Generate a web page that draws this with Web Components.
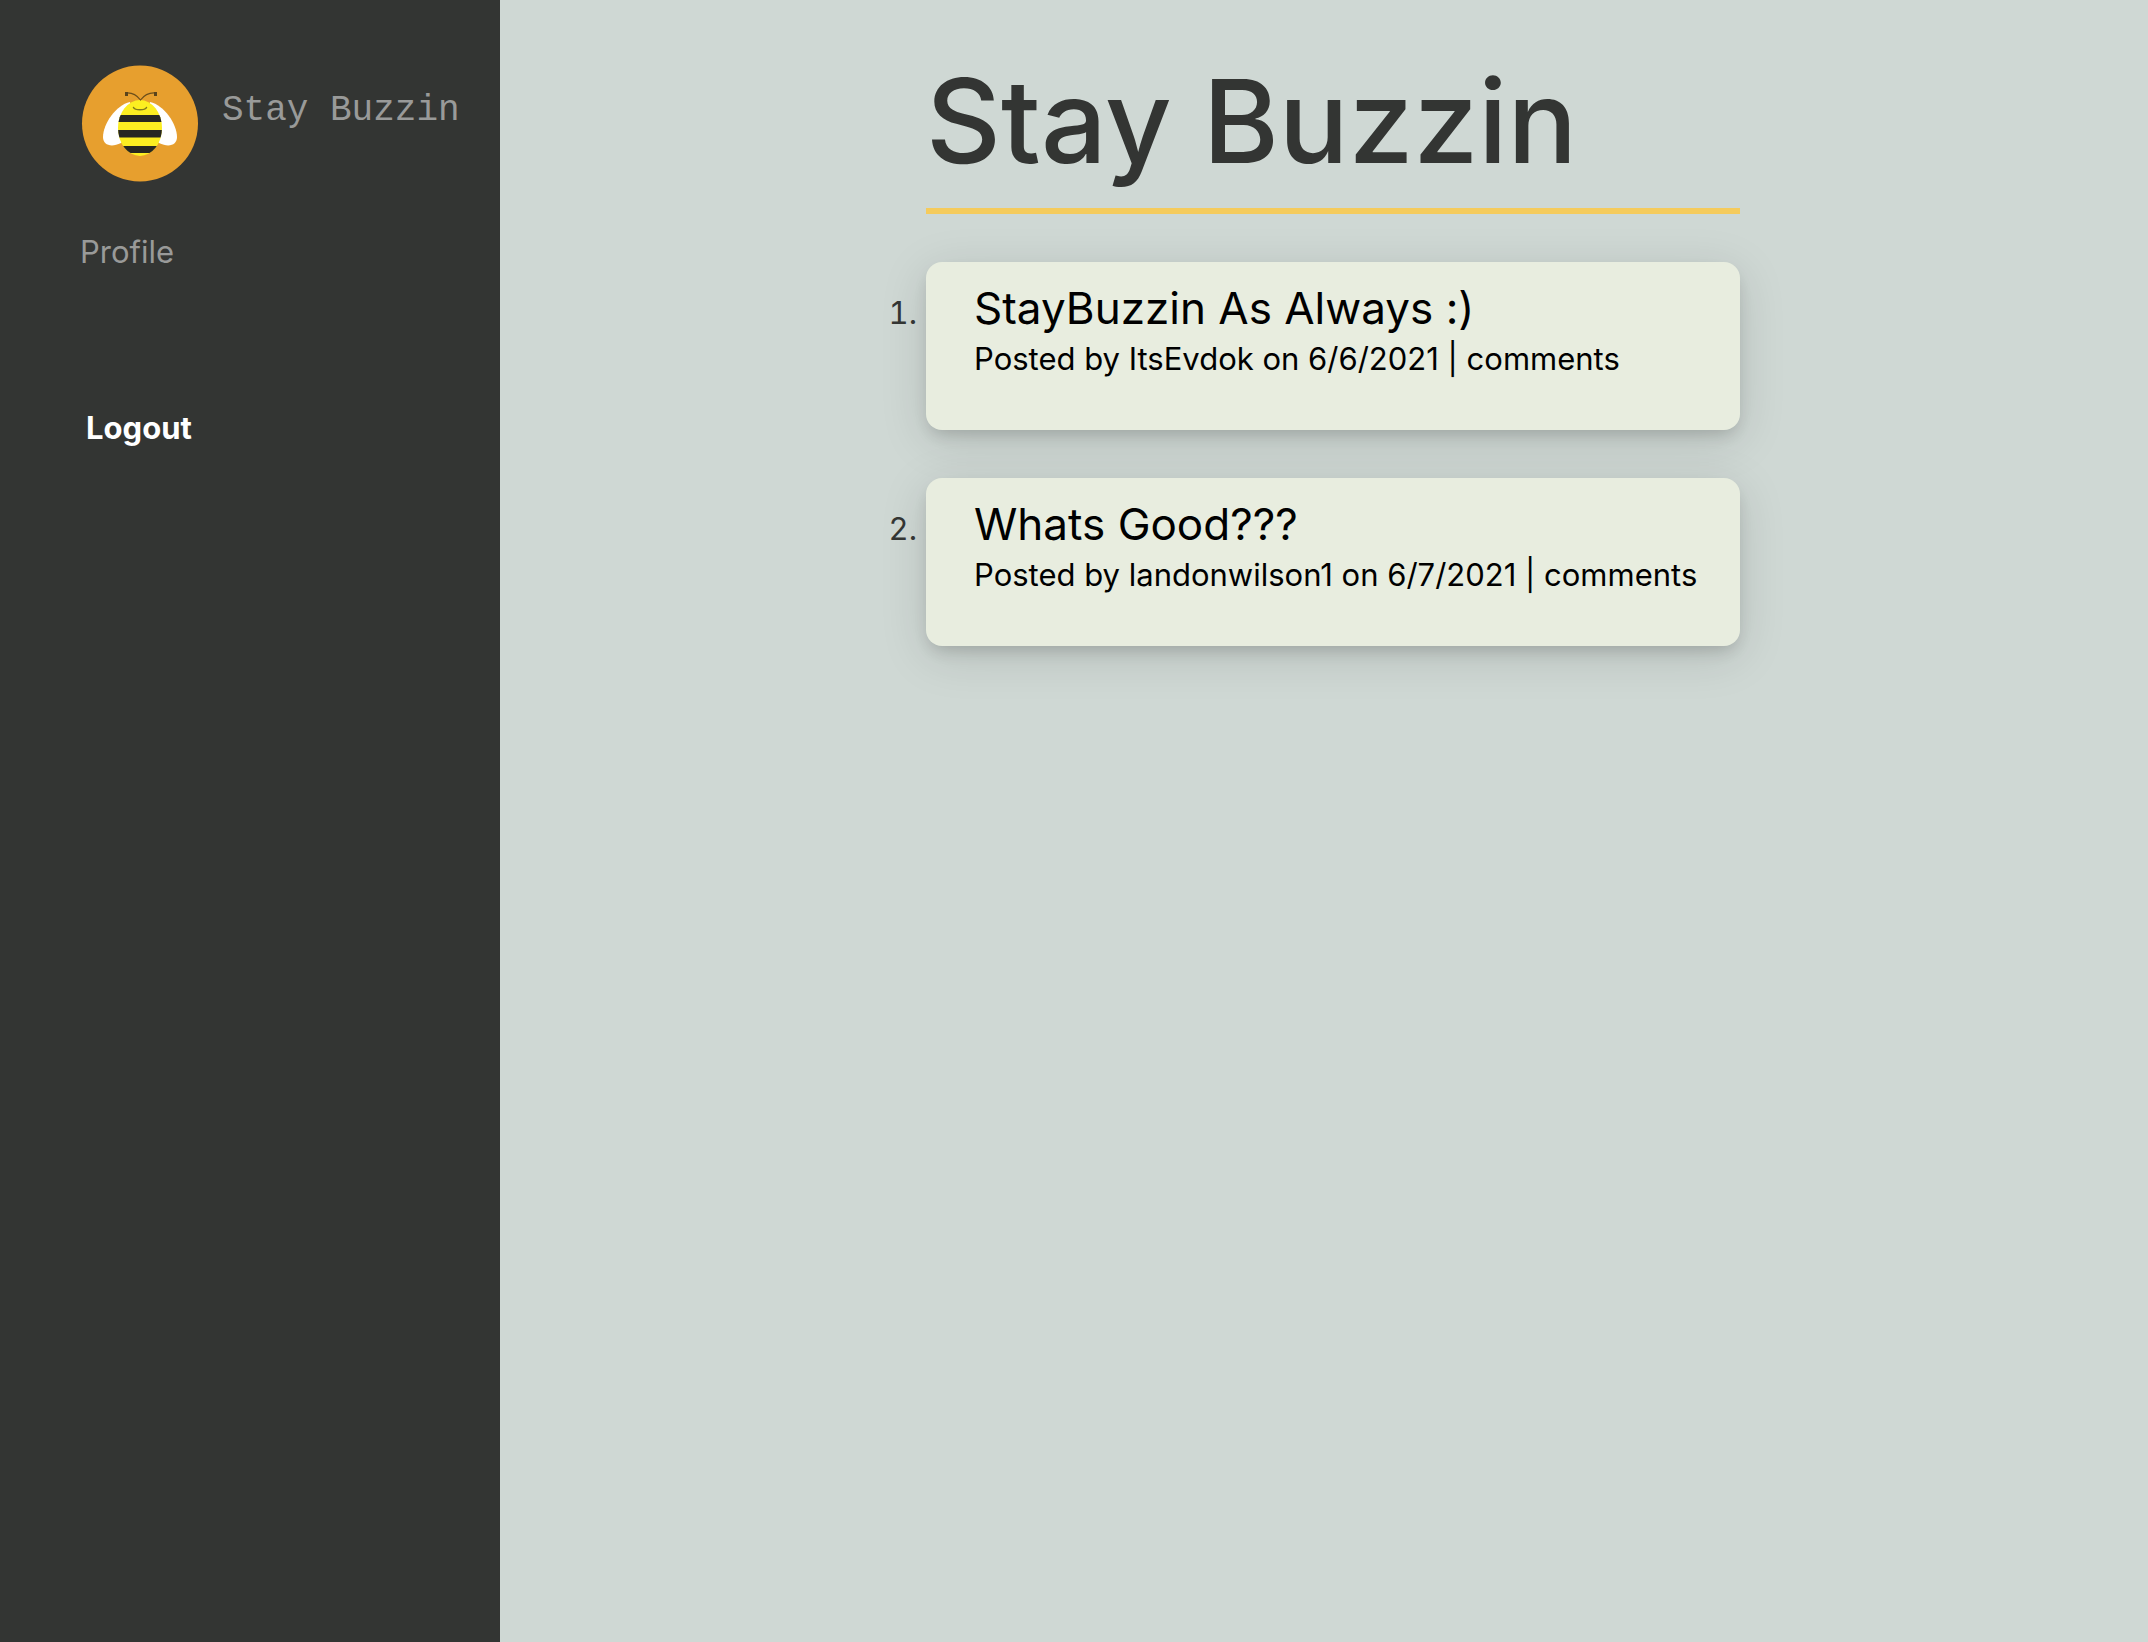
<!DOCTYPE html>
<html lang="en">
<head>
<meta charset="utf-8">
<title>Stay Buzzin</title>
<style>
  :root {
    --ink: #333533;
    --mist: #cfd8d4;
    --cream: #e8eddf;
    --honey: #f5cb5c;
    --muted: #999a99;
  }
  body {
    margin: 0;
    background: var(--mist);
    color: var(--ink);
    font-family: Inter, "Noto Sans", sans-serif;
    font-size: 31px;
    line-height: 48px;
  }
</style>
</head>
<body>
<buzz-app>
  <buzz-sidebar slot="sidebar"></buzz-sidebar>
  <buzz-feed heading="Stay Buzzin">
    <buzz-post number="1" author="ItsEvdok" date="6/6/2021">StayBuzzin As Always :)</buzz-post>
    <buzz-post number="2" author="landonwilson1" date="6/7/2021">Whats Good???</buzz-post>
  </buzz-feed>
</buzz-app>
<script>
class BuzzElement extends HTMLElement {
  constructor() {
    super();
    this.attachShadow({ mode: "open" });
  }
  connectedCallback() {
    this.shadowRoot.innerHTML = this.render();
  }
}

customElements.define("buzz-app", class extends BuzzElement {
  render() {
    return `
      <style>
        :host { display: flex; min-height: 100vh; }
        main { flex: 1; min-width: 0; }
      </style>
      <slot name="sidebar"></slot>
      <main><slot></slot></main>`;
  }
});

customElements.define("buzz-logo", class extends BuzzElement {
  render() {
    return `
      <style>
        :host { display: block; width: 118px; height: 118px; }
        svg { display: block; width: 100%; height: 100%; }
      </style>
      <svg viewBox="-1 -1 118 118" role="img" aria-label="Bee">
        <defs><clipPath id="body"><ellipse cx="59" cy="63" rx="22" ry="28"/></clipPath></defs>
        <circle cx="59" cy="58.500" r="58" fill="#e79f2e"/>
        <path d="M49 37C35 40 22 59 22 72C22 80 30 83 40 78L52 68Z" fill="#fff"/>
        <path d="M69 37C83 40 96 59 96 72C96 80 88 83 78 78L66 68Z" fill="#fff"/>
        <g clip-path="url(#body)">
          <rect x="34" y="32" width="50" height="62" fill="#fcee21"/>
          <path d="M34 50H84V57H34ZM34 65H84V72.500H34ZM34 81H84V88H34Z" fill="#272722"/>
        </g>
        <g fill="none" stroke="#6b4e1b" stroke-width="1.200" stroke-linecap="round">
          <path d="M59.500 35C56 30.500 52 27.500 45.500 28M59.500 35C63 30.500 67 27.500 74 28"/>
          <path d="M52.500 42.500C54 45.500 64 45.500 65.500 42.500" stroke="#817a1c" stroke-width="1.500"/>
        </g>
        <path d="M44 27h3v4h-3ZM73 27h3v4h-3Z" fill="#5a441c"/>
      </svg>`;
  }
});

customElements.define("buzz-sidebar", class extends BuzzElement {
  render() {
    return `
      <style>
        :host {
          display: flex; flex-direction: column; align-items: flex-start;
          box-sizing: border-box; flex: 0 0 500px;
          padding: 64px 40px 48px 80px;
          background: var(--ink);
        }
        a { color: var(--muted); text-decoration: none; }
        .brand {
          display: flex; gap: 24px; white-space: nowrap;
          font: 36px/94px "Liberation Mono", monospace;
        }
        .profile { margin-top: 46px; }
        button {
          margin: 128px 0 0; padding: 0 6px; border: 0; background: none;
          color: #fff; font: inherit; font-weight: 700; cursor: pointer;
        }
      </style>
      <a class="brand" href="#"><buzz-logo></buzz-logo><span>Stay Buzzin</span></a>
      <a class="profile" href="#profile">Profile</a>
      <button type="button">Logout</button>`;
  }
});

customElements.define("buzz-feed", class extends BuzzElement {
  render() {
    return `
      <style>
        :host {
          display: flex; flex-direction: column; gap: 48px;
          width: 814px; max-width: 100%; margin: 0 auto;
          padding: 48px 0 48px 18px;
        }
        h1 {
          margin: 0; padding-bottom: 14px;
          border-bottom: 6px solid var(--honey);
          font-size: 116px; font-weight: 500; line-height: 146px;
        }
        section { display: flex; flex-direction: column; gap: 48px; }
      </style>
      <h1>${this.getAttribute("heading")}</h1>
      <section role="list"><slot></slot></section>`;
  }
});

customElements.define("buzz-post", class extends BuzzElement {
  render() {
    return `
      <style>
        :host { display: block; position: relative; }
        .number {
          position: absolute; right: 100%; top: 27px; padding-right: 9px;
          font-variant-numeric: tabular-nums;
        }
        article {
          box-sizing: border-box; min-height: 168px; padding: 18px 48px 48px;
          border-radius: 16px; background: var(--cream); color: #000;
          box-shadow: 0 8px 16px -4px rgba(0, 0, 0, .16), 0 10px 48px rgba(0, 0, 0, .13);
        }
        h2 { margin: 0; font-size: 44px; font-weight: 400; line-height: 56px; }
        p { margin: 0; line-height: 46px; white-space: nowrap; }
        a { color: inherit; text-decoration: none; }
      </style>
      <span class="number">${this.getAttribute("number")}.</span>
      <article>
        <h2><a href="#post"><slot></slot></a></h2>
        <p>Posted by ${this.getAttribute("author")} on ${this.getAttribute("date")} | <a href="#comments">comments</a></p>
      </article>`;
  }
  connectedCallback() {
    this.setAttribute("role", "listitem");
    super.connectedCallback();
  }
});
</script>
</body>
</html>
